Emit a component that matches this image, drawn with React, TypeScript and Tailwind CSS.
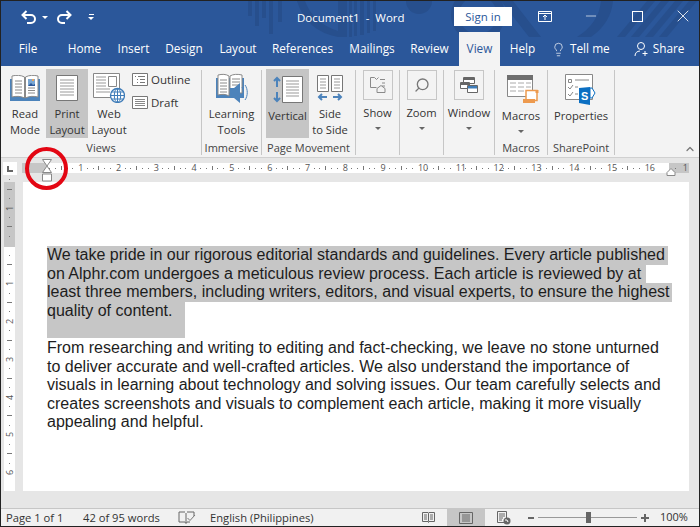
import { ChevronUp, Lightbulb, Minus, Search, X } from "lucide-react";

const FONT = "[font-family:'Open_Sans','Noto_Sans',sans-serif]";

const TABS = [
  { label: "File", w: "w-[54px]" },
  { label: "Home", w: "w-[59px]" },
  { label: "Insert", w: "w-[39px]" },
  { label: "Design", w: "w-[62px]" },
  { label: "Layout", w: "w-[46px]" },
  { label: "References", w: "w-[83px]" },
  { label: "Mailings", w: "w-[56px]" },
  { label: "Review", w: "w-[59px]" },
];

const SELECTED = [
  { text: "We take pride in our rigorous editorial standards and guidelines. Every article published", w: "w-[621px]" },
  { text: "on Alphr.com undergoes a meticulous review process. Each article is reviewed by at", w: "w-[599px]" },
  { text: "least three members, including writers, editors, and visual experts, to ensure the highest", w: "w-[625px]" },
];

const BODY = [
  "From researching and writing to editing and fact-checking, we leave no stone unturned",
  "to deliver accurate and well-crafted articles. We also understand the importance of",
  "visuals in learning about technology and solving issues. Our team carefully selects and",
  "creates screenshots and visuals to complement each article, making it more visually",
  "appealing and helpful.",
];

function Sep() {
  return <div className="mt-[4px] h-[85px] w-[1px] shrink-0 bg-[#c6c6c6]" />;
}

function BigButton({ icon, lines, active, w }: { icon: React.ReactNode; lines: string[]; active?: boolean; w: string }) {
  return (
    <div className={`flex h-[69px] flex-col items-center pt-[4px] ${w} ${active ? "bg-[#c5c5c5]" : ""}`}>
      <div className="flex h-[32px] items-center justify-center">{icon}</div>
      <div className="mt-[3px] text-center text-[11.2px] leading-[16px] whitespace-nowrap text-[#333]">
        {lines.map((l) => (
          <div key={l}>{l}</div>
        ))}
      </div>
    </div>
  );
}

function BoxButton({ label, w, icon }: { label: string; w: string; icon: React.ReactNode }) {
  return (
    <div className={`flex flex-col items-center pt-[4px] ${w}`}>
      <div className="flex h-[30px] w-[30px] items-center justify-center border border-[#c6c6c6] bg-[#f3f3f3]">{icon}</div>
      <div className="mt-[5px] text-[11.2px] leading-[16px] whitespace-nowrap text-[#333]">{label}</div>
      <Caret />
    </div>
  );
}

function Caret() {
  return <div className="mt-[6px] h-0 w-0 border-x-[3px] border-t-[3px] border-x-transparent border-t-[#666]" />;
}

function GroupLabel({ text }: { text: string }) {
  return <div className="mt-auto text-center text-[11px] leading-[16px] whitespace-nowrap text-[#444]">{text}</div>;
}

function BookIcon() {
  return (
    <svg width="32" height="26" viewBox="0 0 32 26" fill="none">
      <path d="M1 4h30v22H1z" fill="#4c83bb" />
      <path d="M3 1c4-1 9-1 12.500 1v21C12 21 7 21 3 22zM16.500 2C20 0 25 0 29 1v21c-4-1-9-1-12.500 1z" fill="#fff" stroke="#8a8a8a" />
      <path d="M6 6h7M6 9h7M6 12h7M6 15h7M6 18h7M19 13h7M19 15.500h7M19 18h7" stroke="#8a8a8a" />
      <path d="M19 4h7v7h-7z" fill="#7aa7d3" />
      <path d="M19 11l3-3 2 2 2-1v2z" fill="#2b579a" />
      <path d="M23 4h2v2h-2z" fill="#e8a15b" />
    </svg>
  );
}

function PageIcon() {
  return (
    <svg width="22" height="26" viewBox="0 0 22 26" fill="none">
      <path d="M.5.500h21v25H.500z" fill="#fff" stroke="#777" />
      <path d="M4 5h14M4 8h14M4 11h14M4 14h14M4 17h14M4 20h14" stroke="#999" />
    </svg>
  );
}

function WebIcon() {
  return (
    <svg width="32" height="30" viewBox="0 0 32 30" fill="none">
      <path d="M.5.500h26v24H.500z" fill="#fff" stroke="#888" />
      <path d="M3 4h10M3 7h10M3 10h10M3 13h10M3 16h14M3 19h14" stroke="#999" />
      <path d="M15.500 3.500h8v10h-8z" fill="#fff" stroke="#888" />
      <circle cx="24.500" cy="22.500" r="7" fill="#fff" stroke="#3f7cb8" strokeWidth="1.300" />
      <path d="M17.500 22.500h14M18.500 19h12M18.500 26h12M24.500 15.500v14" stroke="#3f7cb8" />
      <ellipse cx="24.500" cy="22.500" rx="3.200" ry="7" stroke="#3f7cb8" />
    </svg>
  );
}

function OutlineIcon() {
  return (
    <svg width="16" height="13" viewBox="0 0 16 13" fill="none">
      <path d="M.5.500h15v12H.500z" fill="#fff" stroke="#777" />
      <path d="M3 3.500h1M6 3.500h7M5 6.500h1M8 6.500h5M5 9.500h1M8 9.500h5" stroke="#777" />
    </svg>
  );
}

function DraftIcon() {
  return (
    <svg width="16" height="13" viewBox="0 0 16 13" fill="none">
      <path d="M.5.500h15v12H.500z" fill="#fff" stroke="#777" />
      <path d="M3 3.500h10M3 5.500h10M3 7.500h10M3 9.500h10" stroke="#888" />
    </svg>
  );
}

function LearningIcon() {
  return (
    <svg width="33" height="30" viewBox="0 0 33 30" fill="none">
      <path d="M1 5h28v20H1z" fill="#4c83bb" />
      <path d="M3 2c4-1 8-1 11 1v20c-3-2-7-2-11-1zM15 3c3-2 8-2 12-1v18H15z" fill="#fff" stroke="#8a8a8a" />
      <path d="M5 7h7M5 10h7M5 13h7M5 16h7M5 19h7M17 6h8M17 9h8M17 12h8" stroke="#8a8a8a" />
      <path d="M15 15h4l6-5v20l-6-5h-4z" fill="#4c83bb" />
      <path d="M27 14c2 3 2 8 0 11M30 12c3 4 3 11 0 15" stroke="#4c83bb" />
    </svg>
  );
}

function VerticalIcon() {
  return (
    <svg width="30" height="27" viewBox="0 0 30 27" fill="none">
      <path d="M9.500.500h20v26h-20z" fill="#fff" stroke="#777" />
      <path d="M13 5h13M13 8h13M13 11h13M13 14h13M13 17h13M13 20h13" stroke="#999" />
      <path d="M4 2v9M1 5l3-3 3 3M4 16v9M1 22l3 3 3-3" stroke="#4c83bb" strokeWidth="2" />
    </svg>
  );
}

function SideIcon() {
  return (
    <svg width="28" height="27" viewBox="0 0 28 27" fill="none">
      <path d="M1.500.500h11v16h-11zM15.500.500h11v16h-11z" fill="#fff" stroke="#777" />
      <path d="M4 4h6M4 7h6M4 10h6M4 13h6M18 4h6M18 7h6M18 10h6M18 13h6" stroke="#999" />
      <path d="M3 22h8M6 19l-3 3 3 3M17 22h8M22 19l3 3-3 3" stroke="#4c83bb" strokeWidth="2" />
    </svg>
  );
}

function ShowIcon() {
  return (
    <svg width="18" height="18" viewBox="0 0 18 18" fill="none" stroke="#8a8a8a">
      <path d="M1.500 1.500h4l2 2 2-2M1.500 1.500v10h6M11 3.500h5M13 7h3M13 10h3M8 16.500v-4l4-3 4 3v4z" />
    </svg>
  );
}

function WindowIcon() {
  return (
    <svg width="18" height="16" viewBox="0 0 18 16" fill="none">
      <path d="M3.500.500h11v6h-11z" fill="#fff" stroke="#666" />
      <path d="M3 1h12v2H3z" fill="#666" />
      <path d="M.5 5.500h9v6h-9z" fill="#fff" stroke="#666" />
      <path d="M1 6h8v2H1z" fill="#666" />
      <path d="M7.500 8.500h10v7h-10z" fill="#fff" stroke="#666" />
      <path d="M8 9h9v2.500H8z" fill="#3f7cb8" />
    </svg>
  );
}

function MacrosIcon() {
  return (
    <svg width="32" height="29" viewBox="0 0 32 29" fill="none">
      <path d="M.5.500h25v21H.500z" fill="#fff" stroke="#888" />
      <path d="M0 0h26v5H0z" fill="#6e6e6e" />
      <path d="M3 8h6M11 8h6M19 8h5M3 12h6M11 12h6M19 12h5M3 16h6M11 16h6" stroke="#aaa" />
      <path d="M19 15.500h11v10H19z" fill="#fff" stroke="#ed9a4e" strokeWidth="1.500" />
      <path d="M16 24h12v4H16z" fill="#ed9a4e" />
      <path d="M28.500 15h3v3h-3z" fill="#ed9a4e" />
    </svg>
  );
}

function PropertiesIcon() {
  return (
    <svg width="31" height="31" viewBox="0 0 31 31" fill="none">
      <path d="M.5.500h27v25H.500z" fill="#fff" stroke="#888" />
      <path d="M3.500 5.500h3v3h-3z" stroke="#888" />
      <path d="M10 6h14M10 13h3M10 20h3M3 13l2 2 3-4M3 20l2 2 3-4" stroke="#888" />
      <path d="M14 14l11-1v18l-11-2z" fill="#0b6fc2" />
      <path d="M25 14h2l3 5-3 5h-2z" fill="#fff" stroke="#0b6fc2" />
      <text x="16" y="26" fill="#fff" fontSize="11" fontWeight="700" fontFamily="'Liberation Sans',sans-serif">S</text>
    </svg>
  );
}

function ReadBook() {
  return (
    <svg width="13" height="13" viewBox="0 0 13 13" fill="none" stroke="#666">
      <path d="M.5 1.500h5.500l.5 1 .5-1h5.500v9H7l-.5 1-.5-1H.500zM6.500 2.500v8M2 4h3M2 6h3M2 8h3M8 4h3M8 6h3M8 8h3" />
    </svg>
  );
}

function PrintPage() {
  return (
    <svg width="14" height="12" viewBox="0 0 14 12" fill="none" stroke="#666">
      <path d="M.5.500h13v11H.500zM3 3h8M3 5h8M3 7h8M3 9h8" />
    </svg>
  );
}

function WebPage() {
  return (
    <svg width="14" height="14" viewBox="0 0 14 14" fill="none">
      <path d="M.5.500h9v11H.500zM2 3h6M2 5h6M2 7h4M2 9h3" stroke="#666" />
      <circle cx="10" cy="10" r="3.500" fill="#666" />
      <path d="M8 9h2l1 2" stroke="#fff" />
    </svg>
  );
}

function ProofIcon() {
  return (
    <svg width="18" height="13" viewBox="0 0 18 13" fill="none" stroke="#666">
      <path d="M7 1H1v10h6l1 1.500L9 11h3M8 2v9M9 1h7v4" />
      <path d="M9.500 7l2.500 2.500L17 4" stroke="#777" />
    </svg>
  );
}

// one inch of ruler is 37.800px at this zoom, numbers start at the left margin
function HRuler() {
  const marks: React.ReactNode[] = [];
  for (let n = 1; n <= 16; n++) {
    marks.push(
      <div key={n} className="flex w-[37.800px] shrink-0 items-center justify-between pl-[3px]">
        <span className="h-[1px] w-[1px] bg-[#777]" />
        <span className="h-[1px] w-[1px] bg-[#777]" />
        <span className="h-[4px] w-[1px] bg-[#777]" />
        <span className="h-[1px] w-[1px] bg-[#777]" />
        <span className="h-[1px] w-[1px] bg-[#777]" />
        <span className="w-[6px] text-center text-[9px] leading-[10px] text-[#555]">{n}</span>
      </div>
    );
  }
  return <div className="flex h-[10px] items-center">{marks}</div>;
}

function VUnit({ label }: { label: string }) {
  return (
    <div className="flex h-[37.800px] shrink-0 flex-col items-center">
      <div className="flex h-[9.450px] items-center"><span className="h-[1px] w-[1px] bg-[#777]" /></div>
      <div className="flex h-[9.450px] items-center"><span className="h-[1px] w-[5px] bg-[#777]" /></div>
      <div className="flex h-[9.450px] items-center"><span className="h-[1px] w-[1px] bg-[#777]" /></div>
      <div className="flex h-[9.450px] items-center">
        <span className="-rotate-90 text-[9px] leading-[9px] text-[#555]">{label}</span>
      </div>
    </div>
  );
}

export default function App() {
  return (
    <div className={`relative flex h-[527px] w-[700px] flex-col overflow-hidden border border-[#222] bg-[#e6e6e6] ${FONT}`}>
      <div className="relative shrink-0 bg-[#2b579a] text-white">
        {/* office background art */}
        <svg className="absolute top-0 left-0" width="698" height="36" viewBox="0 0 698 36" fill="#274f8d">
          <path d="M247 0h4v15h-4zM254 0h4v25h-4zM261 0h4v17h-4zM268 0h4v33h-4zM277 0h4v21h-4z" />
          <path d="M296 0h8q8 22 33 30v6q-32-6-41-36z" />
          <path d="M337 0h9v37h-9zM348 0h3v36h-3zM353 0h3v35h-3zM359 0h4v34h-4zM366 0h3v32h-3zM372 0h3v30h-3z" />
          <circle cx="418" cy="0" r="13" />
          <circle cx="477" cy="14" r="23" fill="none" stroke="#274f8d" strokeWidth="8" />
          <path d="M500 0h12l28 36h-12zM600 0h12q-2 22-22 36h-14q22-14 24-36z" />
          <path d="M646 0h8l-30 36h-8zM660 0h8l-30 36h-8zM674 0h8l-30 36h-8zM688 0h8l-30 36h-8z" />
        </svg>

        {/* title bar */}
        <div className="relative h-[31px]">
          <svg className="absolute top-[9px] left-[20px]" width="16" height="15" viewBox="0 0 16 15" fill="none" stroke="#fff" strokeWidth="2">
            <path d="M2 5h8a4 4 0 0 1 0 8H6M5.500 1L1.500 5l4 4" />
          </svg>
          <div className="absolute top-[15px] left-[41px] h-0 w-0 border-x-[3px] border-t-[3px] border-x-transparent border-t-white" />
          <svg className="absolute top-[9px] left-[55px]" width="16" height="15" viewBox="0 0 16 15" fill="none" stroke="#fff" strokeWidth="2">
            <path d="M14 5H6a4 4 0 0 0 0 8h3M10.500 1l4 4-4 4" />
          </svg>
          <div className="absolute top-[13px] left-[87px] flex flex-col items-center gap-[2px]">
            <div className="h-[1px] w-[5px] bg-white" />
            <div className="h-0 w-0 border-x-[3px] border-t-[3px] border-x-transparent border-t-white" />
          </div>
          <div className="absolute top-[8px] left-[296px] text-[11.500px] leading-[17px] whitespace-pre">Document1  -  Word</div>
          <div className="absolute top-[6px] left-[453px] flex h-[19px] w-[58px] items-center justify-center bg-white text-[11.500px] text-[#2b579a]">Sign in</div>
          <svg className="absolute top-[10px] left-[537px]" width="14" height="11" viewBox="0 0 14 11" fill="none" stroke="#fff">
            <path d="M.5.500h13v10H.500zM1 2.500h12M7 9V4.500M5 6l2-2 2 2" />
          </svg>
          <Minus className="absolute top-[7px] left-[582px]" size={16} strokeWidth={1} />
          <div className="absolute top-[10px] left-[631px] h-[11px] w-[11px] border border-white" />
          <X className="absolute top-[5px] left-[672px]" size={20} strokeWidth={1} />
        </div>

        {/* tabs */}
        <div className="relative flex h-[34px] items-center text-[11.800px]">
          {TABS.map((t) => (
            <div key={t.label} className={`text-center ${t.w}`}>{t.label}</div>
          ))}
          <div className="flex h-full w-[41px] items-center justify-center bg-[#f3f3f3] text-[#2b579a]">View</div>
          <div className="w-[45px] text-center">Help</div>
          <Lightbulb className="ml-[6px]" size={15} strokeWidth={1.100} />
          <div className="ml-[4px]">Tell me</div>
          <svg className="ml-[24px]" width="16" height="16" viewBox="0 0 16 16" fill="none" stroke="#fff">
            <circle cx="7" cy="5" r="3.500" />
            <path d="M1 15c0-3 2-5 5-5M11 10v5M8.500 12.500h5" />
          </svg>
          <div className="ml-[3px]">Share</div>
        </div>
      </div>

      {/* ribbon */}
      <div className="flex h-[92px] shrink-0 border-b border-[#d0d0d0] bg-[#f3f3f3] pb-[1px]">
        <div className="flex w-[200px] shrink-0 flex-col">
          <div className="mt-[3px] flex pl-[3px]">
            <BigButton w="w-[42px]" icon={<BookIcon />} lines={["Read", "Mode"]} />
            <BigButton w="w-[42px]" active icon={<PageIcon />} lines={["Print", "Layout"]} />
            <BigButton w="w-[42px]" icon={<WebIcon />} lines={["Web", "Layout"]} />
            <div className="ml-[2px] flex flex-col gap-[8px] pt-[3px] text-[11.500px] leading-[15px] text-[#333]">
              <div className="flex items-center gap-[3px]"><OutlineIcon />Outline</div>
              <div className="flex items-center gap-[3px]"><DraftIcon />Draft</div>
            </div>
          </div>
          <GroupLabel text="Views" />
        </div>
        <Sep />
        <div className="flex w-[59px] shrink-0 flex-col">
          <div className="mt-[3px]"><BigButton w="w-full" icon={<LearningIcon />} lines={["Learning", "Tools"]} /></div>
          <GroupLabel text="Immersive" />
        </div>
        <Sep />
        <div className="flex w-[93px] shrink-0 flex-col">
          <div className="mt-[3px] flex pl-[4px]">
            <BigButton w="w-[43px]" active icon={<VerticalIcon />} lines={["Vertical"]} />
            <BigButton w="w-[42px]" icon={<SideIcon />} lines={["Side", "to Side"]} />
          </div>
          <GroupLabel text="Page Movement" />
        </div>
        <Sep />
        <BoxButton w="w-[43px]" label="Show" icon={<ShowIcon />} />
        <Sep />
        <BoxButton w="w-[43px]" label="Zoom" icon={<Search size={16} strokeWidth={2} className="scale-x-[-1] text-[#777]" />} />
        <Sep />
        <BoxButton w="w-[50px]" label="Window" icon={<WindowIcon />} />
        <Sep />
        <div className="flex w-[52px] shrink-0 flex-col items-center">
          <div className="mt-[3px] flex flex-col items-center pt-[4px]">
            <div className="flex h-[32px] items-center justify-center pl-[4px]"><MacrosIcon /></div>
            <div className="mt-[3px] text-[11.200px] leading-[16px] text-[#333]">Macros</div>
            <Caret />
          </div>
          <GroupLabel text="Macros" />
        </div>
        <Sep />
        <div className="flex w-[66px] shrink-0 flex-col items-center">
          <div className="mt-[3px] flex flex-col items-center pt-[4px]">
            <div className="flex h-[32px] items-center justify-center"><PropertiesIcon /></div>
            <div className="mt-[3px] text-[11.200px] leading-[16px] text-[#333]">Properties</div>
          </div>
          <GroupLabel text="SharePoint" />
        </div>
        <Sep />
        <div className="flex flex-1 items-end justify-end pr-[3px] pb-[1px]">
          <ChevronUp size={12} strokeWidth={2.500} className="text-[#777]" />
        </div>
      </div>

      {/* ruler row */}
      <div className="flex h-[24px] shrink-0 items-start pt-[4px]">
        <div className="ml-[2px] flex h-[13px] w-[14px] items-center justify-center bg-white">
          <div className="mt-[1px] h-[6px] w-[6px] border-b-2 border-l-2 border-[#666]" />
        </div>
        <div className="mt-[1px] ml-[5px] flex h-[10px] w-[667px] bg-white">
          <div className="h-full w-[24px] shrink-0 bg-[#c6c6c6]" />
          <div className="w-[623px] shrink-0"><HRuler /></div>
          <div className="flex h-full w-[20px] shrink-0 items-center justify-end gap-[7px] bg-[#c6c6c6] pr-[1px]">
            <span className="h-[1px] w-[1px] bg-[#777]" />
            <span className="text-[9px] leading-[10px] text-[#555]">1</span>
          </div>
        </div>
      </div>

      {/* doc area */}
      <div className="flex flex-1">
        <div className="ml-[3px] h-[309px] w-[11px] shrink-0 bg-[linear-gradient(#c6c6c6_65px,#fff_65px)]">
          <div className="-mt-[7px] flex h-[316px] flex-col items-center">
            <VUnit label="1" />
            <VUnit label="" />
            <VUnit label="1" />
            <VUnit label="2" />
            <VUnit label="3" />
            <VUnit label="4" />
            <VUnit label="5" />
            <VUnit label="6" />
          </div>
        </div>
        <div className="mb-[17px] ml-[8px] w-[666px] bg-white pt-[64px] pl-[24px] text-[16px] leading-[18.500px] whitespace-nowrap text-[#1d1d1d] [font-family:'Liberation_Sans',Arial,sans-serif]">
          {SELECTED.map((l) => (
            <div key={l.w} className={`bg-[#c6c6c6] ${l.w}`}>{l.text}</div>
          ))}
          <div className="h-[36.500px] w-[138px] bg-[#c6c6c6]">quality of content.</div>
          <div className="mt-[1px]">
            {BODY.map((l) => (
              <div key={l}>{l}</div>
            ))}
          </div>
        </div>
      </div>

      {/* status bar */}
      <div className="relative flex h-[18px] shrink-0 items-center border-t border-[#c6c6c6] bg-[#f1f1f1] text-[11.200px] text-[#333]">
        <div className="ml-[5px] w-[77px] pt-[1px]">Page 1 of 1</div>
        <div className="w-[95px] pt-[1px]">42 of 95 words</div>
        <ProofIcon />
        <div className="ml-[14px] pt-[1px]">English (Philippines)</div>
        <div className="ml-auto flex h-full items-center">
          <div className="flex w-[38px] justify-center"><ReadBook /></div>
          <div className="flex h-full w-[38px] items-center justify-center bg-[#c6c6c6]"><PrintPage /></div>
          <div className="flex w-[38px] justify-center"><WebPage /></div>
          <div className="ml-[5px] h-[2px] w-[6px] bg-[#666]" />
          <div className="relative ml-[4px] flex h-full w-[99px] items-center">
            <div className="h-[1px] w-full bg-[#999]" />
            <div className="absolute left-[48px] h-[11px] w-[5px] bg-[#666]" />
          </div>
          <div className="relative ml-[4px] h-[8px] w-[8px]">
            <div className="absolute top-[3px] h-[2px] w-full bg-[#666]" />
            <div className="absolute left-[3px] h-full w-[2px] bg-[#666]" />
          </div>
          <div className="mr-[11px] ml-[11px] w-[28px] text-[11px]">100%</div>
        </div>
      </div>

      {/* ruler indent markers and the red annotation ring */}
      <svg className="absolute top-[158px] left-[40px]" width="12" height="23" viewBox="0 0 12 23" fill="#fff" stroke="#888">
        <path d="M1.500.500h9L6 7l4.500 6.500h-9L6 7z" />
        <path d="M1.500 15h9v7h-9z" />
      </svg>
      <svg className="absolute top-[167px] left-[665px]" width="12" height="8" viewBox="0 0 12 8" fill="#fff" stroke="#888">
        <path d="M1 7.500V4.500L5 .500l4 4v3z" />
      </svg>
      <div className="absolute top-[146px] left-[24px] h-[43px] w-[43px] rounded-full border-4 border-[#e30613]" />
    </div>
  );
}
